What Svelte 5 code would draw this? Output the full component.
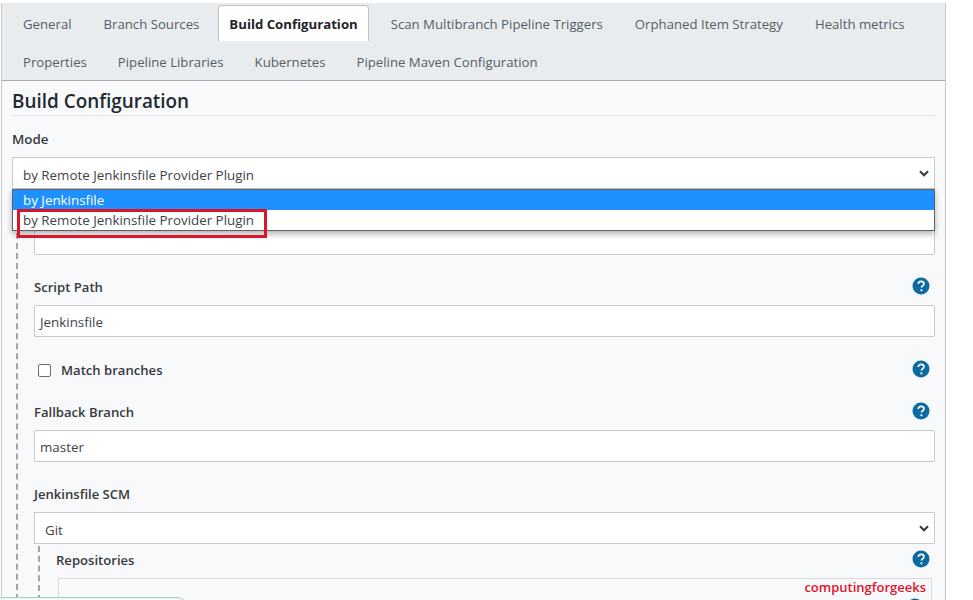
<script>
	const tabRows = [
		['General', 'Branch Sources', 'Build Configuration', 'Scan Multibranch Pipeline Triggers', 'Orphaned Item Strategy', 'Health metrics'],
		['Properties', 'Pipeline Libraries', 'Kubernetes', 'Pipeline Maven Configuration']
	];
	const activeTab = 'Build Configuration';
</script>

{#snippet help()}
	<svg class="help" width="18" height="18" viewBox="0 0 18 18" aria-hidden="true">
		<circle cx="9" cy="9" r="8.5" fill="#0b6aa2" />
		<path d="M6.2 7c0-1.700 1.200-2.700 2.900-2.700 1.700 0 2.800 1 2.800 2.400 0 1.100-.6 1.700-1.400 2.200-.7.500-1 .8-1 1.600" fill="none" stroke="#fff" stroke-width="1.700" />
		<circle cx="9.400" cy="13.300" r="1.100" fill="#fff" />
	</svg>
{/snippet}

{#snippet chevron()}
	<svg class="chevron" width="10" height="7" viewBox="0 0 10 7" aria-hidden="true">
		<path d="M1 1.300l4 4 4-4" fill="none" stroke="#343a40" stroke-width="2" />
	</svg>
{/snippet}

<div class="page">
	<div class="panel">
		<nav class="tabs">
			{#each tabRows as row}
				<div class="tab-row">
					{#each row as tab}
						<span class="tab" class:active={tab === activeTab}>{tab}</span>
					{/each}
				</div>
			{/each}
		</nav>

		<div class="content">
			<h2>Build Configuration</h2>

			<div class="mode-label">Mode</div>
			<div class="select-wrap">
				<div class="select"><span>by Remote Jenkinsfile Provider Plugin</span> {@render chevron()}</div>
				<div class="dropdown">
					<div class="option selected">by Jenkinsfile</div>
					<div class="option">by Remote Jenkinsfile Provider Plugin</div>
				</div>
				<div class="highlight"></div>
			</div>

			<div class="nested">
				<div class="input hidden-input"></div>

				<div class="field-head script-head">
					<label for="script-path">Script Path</label>
					{@render help()}
				</div>
				<div class="input" id="script-path">Jenkinsfile</div>

				<div class="field-head check-head">
					<span class="check-label"><span class="checkbox"></span>Match branches</span>
					{@render help()}
				</div>

				<div class="field-head fallback-head">
					<label for="fallback">Fallback Branch</label>
					{@render help()}
				</div>
				<div class="input" id="fallback">master</div>

				<div class="field-head scm-head">
					<label for="scm">Jenkinsfile SCM</label>
				</div>
				<div class="select git" id="scm"><span>Git</span> {@render chevron()}</div>

				<div class="nested inner">
					<div class="field-head repo-head">
						<span class="repo-label">Repositories</span>
						{@render help()}
					</div>
					<div class="repo-card">
						<span class="watermark">computingforgeeks</span>
						<span class="card-help">{@render help()}</span>
					</div>
				</div>
			</div>
		</div>
	</div>

	<div class="toast"></div>
</div>

<style>
	:global(body) {
		background: #fff;
		overflow: hidden;
	}

	.page {
		position: relative;
		height: 600px;
		overflow: hidden;
		padding-top: 3px;
		box-sizing: border-box;
		font-family: 'Open Sans', 'Noto Sans', sans-serif;
		font-size: 13.35px;
		color: #212529;
	}

	.panel {
		width: 945px;
		height: 640px;
		box-sizing: border-box;
		margin-left: 1px;
		border-left: 1px solid #c8c8c8;
		border-right: 1px solid #c8c8c8;
		background: #f8f9fa;
	}

	.tabs {
		background: #e9ecef;
		border-bottom: 1px solid #aaadb0;
		height: 78px;
		box-sizing: border-box;
		padding: 2px 0 0 10px;
	}

	.tab-row {
		display: flex;
		gap: 10px;
		height: 38px;
	}

	.tab-row + .tab-row {
		gap: 9px;
	}

	.tab {
		padding: 0 11px;
		height: 36px;
		line-height: 38px;
		font-size: 13.2px;
		color: #565e65;
		white-space: nowrap;
		box-sizing: border-box;
	}

	.tab.active {
		height: 36px;
		margin-left: -2px;
		margin-right: 1px;
		padding: 0 10px;
		font-weight: 700;
		color: #212529;
		background: #fff;
		border: 1px solid #bfc3c7;
		border-bottom: none;
		border-radius: 4px 4px 0 0;
		line-height: 36px;
	}

	.content {
		padding: 0 10px 0 10px;
	}

	h2 {
		margin: 0;
		height: 35px;
		box-sizing: border-box;
		padding-top: 7px;
		border-bottom: 1px solid #e3e5e7;
		font-size: 18.9px;
		line-height: 26px;
		font-weight: 600;
		color: #24292e;
	}

	.mode-label {
		margin-top: 13px;
		height: 20px;
		line-height: 20px;
		font-weight: 600;
		color: #343a40;
	}

	.select-wrap {
		position: relative;
		margin-top: 8px;
	}

	.select {
		display: flex;
		align-items: center;
		justify-content: space-between;
		box-sizing: border-box;
		height: 32px;
		padding: 0 5px 0 10px;
		background: #fff;
		border: 1px solid #c8cacc;
		color: #3d4349;
	}

	.select span {
		padding-top: 4px;
	}

	.chevron {
		flex: none;
	}

	.dropdown {
		position: absolute;
		top: 32px;
		left: 0;
		right: 0;
		z-index: 3;
		background: #fff;
		border: 1px solid #5d6165;
		box-shadow: 0 3px 6px rgba(0, 0, 0, 0.3);
		color: #3d4349;
	}

	.option {
		height: 20px;
		line-height: 20px;
		padding-left: 10px;
	}

	.option.selected {
		background: #1e90ff;
		color: #fff;
	}

	.highlight {
		position: absolute;
		top: 52px;
		left: 5px;
		z-index: 4;
		width: 250px;
		height: 29px;
		box-sizing: border-box;
		border: 3px solid #dc1428;
	}

	.nested {
		margin: 0 0 0 4px;
		padding-left: 16px;
		border-left: 2px dashed #a3a5a7;
	}

	.input {
		height: 32px;
		box-sizing: border-box;
		line-height: 32px;
		padding-left: 5px;
		background: #fff;
		border: 1px solid #c8cacc;
		border-radius: 2px;
		color: #3d4349;
	}

	.hidden-input {
		margin-top: 34px;
	}

	.field-head {
		display: flex;
		align-items: center;
		justify-content: space-between;
		height: 20px;
		font-size: 13.1px;
		font-weight: 600;
		color: #343a40;
	}

	.script-head {
		margin-top: 22px;
		margin-bottom: 8px;
	}

	.check-head {
		margin-top: 23px;
	}

	.check-label {
		display: flex;
		align-items: center;
		gap: 10px;
		margin-left: 4px;
	}

	.checkbox {
		width: 13px;
		height: 13px;
		box-sizing: border-box;
		background: #fff;
		border: 1px solid #6d6f71;
		border-radius: 2px;
	}

	.fallback-head {
		margin-top: 22px;
		margin-bottom: 8px;
	}

	.scm-head {
		margin-top: 22px;
		margin-bottom: 8px;
	}

	.git {
		border-radius: 0;
	}

	.help {
		display: block;
		flex: none;
		margin-right: 5px;
		margin-bottom: 2px;
	}

	.inner {
		margin-left: 4px;
		margin-top: 2px;
		padding-left: 16px;
	}

	.repo-head {
		padding-top: 4px;
		height: 20px;
	}

	.repo-label {
		font-weight: 600;
	}

	.repo-card {
		position: relative;
		margin: 8px 3px 0 2px;
		height: 60px;
		background: #f8f9fa;
		border: 1px solid #d8dadc;
	}

	.watermark {
		position: absolute;
		top: -1px;
		right: 5px;
		font-weight: 600;
		font-size: 13px;
		line-height: 18px;
		color: #e2142d;
	}

	.card-help {
		position: absolute;
		top: 19px;
		right: 7px;
	}

	.card-help :global(.help) {
		margin: 0;
	}

	.toast {
		position: absolute;
		left: -6px;
		bottom: -30px;
		width: 193px;
		height: 33px;
		box-sizing: border-box;
		background: #f8f9fa;
		border: 1px solid #9fd0ac;
		border-radius: 10px;
	}
</style>
